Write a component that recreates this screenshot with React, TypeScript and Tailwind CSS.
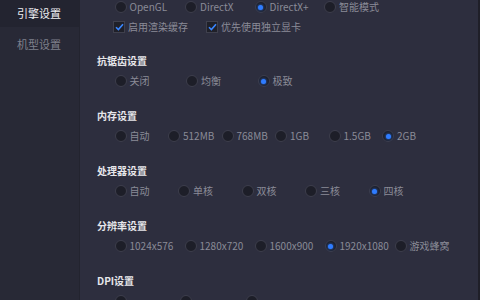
import React from 'react';

type Opt = { label: string; on?: boolean };

function Radio({ label, on, width }: Opt & { width: string }) {
  return (
    <div className={`flex items-center shrink-0 -ml-[0.5px] ${width}`}>
      <span className="w-[12px] h-[12px] rounded-full bg-[#1d1e28] border border-[#3d3e4c] flex items-center justify-center shrink-0">
        {on && <span className="w-[5px] h-[5px] rounded-full bg-[#2f7cff] shadow-[0_0_3px_#2f7cff]" />}
      </span>
      {label && <span className="ml-[3px] text-[10px] leading-none text-[#8a8b97]">{label}</span>}
    </div>
  );
}

function Check({ label, width }: { label: string; width: string }) {
  return (
    <div className={`flex items-center shrink-0 ${width}`}>
      <span className="w-[12px] h-[12px] bg-[#1f2029] border border-[#3f404d] flex items-center justify-center shrink-0">
        <svg width="9" height="8" viewBox="0 0 9 8">
          <path d="M1 4.2 L3.4 6.6 L8 1.2" stroke="#3a86ff" strokeWidth="1.6" fill="none" />
        </svg>
      </span>
      <span className="ml-[3px] text-[10px] leading-none text-[#8a8b97]">{label}</span>
    </div>
  );
}

function Section({ title, opts, width, first }: { title: string; opts: Opt[]; width: string; first?: boolean }) {
  return (
    <div className={first ? 'mt-[19px]' : 'mt-[20px]'}>
      <div className="h-[16px] flex items-center text-[10px] font-bold text-[#e6e6ea] leading-none">{title}</div>
      <div className="mt-[5px] h-[14px] flex items-center pl-[18px]">
        {opts.map((o, i) => (
          <Radio key={i} {...o} width={width} />
        ))}
      </div>
    </div>
  );
}

export default function App() {
  return (
    <div
      className="w-[480px] h-[300px] overflow-hidden flex bg-[#2d2e3e]"
      style={{ fontFamily: '"Noto Sans CJK SC", "Noto Sans", sans-serif' }}
    >
      <aside className="w-[80px] shrink-0 bg-[#282936] border-r border-[#23242f] flex flex-col">
        <div className="h-[27px] bg-[#232430] flex items-center pl-[17px] text-[11px] text-[#eeeef2]">引擎设置</div>
        <div className="h-[34px] flex items-center pl-[17px] text-[11px] text-[#7f808c]">机型设置</div>
      </aside>
      <main className="flex-1 pl-[17px]">
        <div className="h-[14px] flex items-center pl-[18px]">
          <Radio label="OpenGL" width="w-[71px]" />
          <Radio label="DirectX" width="w-[70px]" />
          <Radio label="DirectX+" on width="w-[70px]" />
          <Radio label="智能模式" width="w-[70px]" />
        </div>
        <div className="mt-[6px] h-[14px] flex items-center pl-[16px]">
          <Check label="启用渲染缓存" width="w-[93px]" />
          <Check label="优先使用独立显卡" width="w-[120px]" />
        </div>
        <Section
          first
          title="抗锯齿设置"
          width="w-[72px]"
          opts={[{ label: '关闭' }, { label: '均衡' }, { label: '极致', on: true }]}
        />
        <Section
          title="内存设置"
          width="w-[54px]"
          opts={[
            { label: '自动' },
            { label: '512MB' },
            { label: '768MB' },
            { label: '1GB' },
            { label: '1.5GB' },
            { label: '2GB', on: true },
          ]}
        />
        <Section
          title="处理器设置"
          width="w-[64px]"
          opts={[
            { label: '自动' },
            { label: '单核' },
            { label: '双核' },
            { label: '三核' },
            { label: '四核', on: true },
          ]}
        />
        <Section
          title="分辨率设置"
          width="w-[70.5px]"
          opts={[
            { label: '1024x576' },
            { label: '1280x720' },
            { label: '1600x900' },
            { label: '1920x1080', on: true },
            { label: '游戏蜂窝' },
          ]}
        />
        <Section
          title="DPI设置"
          width="w-[66px]"
          opts={[{ label: '' }, { label: '' }, { label: '' }]}
        />
      </main>
      <div className="w-[2px] shrink-0 bg-[#1f1f28]" />
    </div>
  );
}
